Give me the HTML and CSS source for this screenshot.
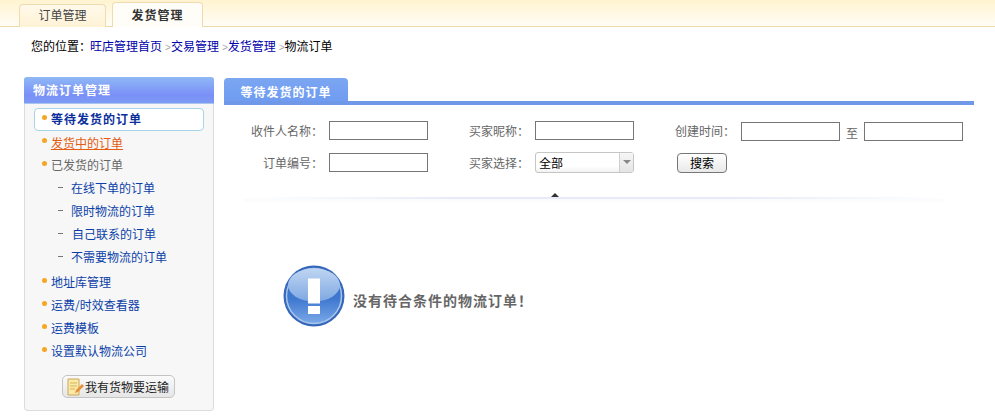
FILE: index.html
```html
<!DOCTYPE html>
<html lang="zh-CN">
<head>
<meta charset="utf-8">
<title>物流订单</title>
<link rel="stylesheet" href="styles.css">
</head>
<body>
<nav class="topbar">
  <a class="toptab">订单管理</a>
  <a class="toptab active">发货管理</a>
</nav>
<div class="crumbs">您的位置：<a>旺店管理首页</a><i>&gt;</i><a>交易管理</a><i>&gt;</i><a>发货管理</a><i>&gt;</i>物流订单</div>
<div class="layout">
  <aside class="side">
    <h2 class="side-head">物流订单管理</h2>
    <ul class="menu">
      <li class="item current">等待发货的订单</li>
      <li class="item doing">发货中的订单</li>
      <li class="item plain">已发货的订单</li>
      <li class="sub">在线下单的订单</li>
      <li class="sub">限时物流的订单</li>
      <li class="sub indent">自己联系的订单</li>
      <li class="sub last">不需要物流的订单</li>
      <li class="item">地址库管理</li>
      <li class="item">运费/时效查看器</li>
      <li class="item">运费模板</li>
      <li class="item">设置默认物流公司</li>
    </ul>
    <div class="ship-wrap">
      <button class="ship" type="button">
        <svg width="17" height="18" viewBox="0 0 17 18"><path d="M1 1h11v16H1z" fill="#fbe9a6" stroke="#c9a860"/><path d="M3 5h7M3 8h7M3 11h5" stroke="#d9b45c"/><path d="M8 15l1-3 6-6 2 2-6 6z" fill="#e8913a"/></svg>
        我有货物要运输
      </button>
    </div>
  </aside>
  <main class="main">
    <div class="tabline"><h2 class="maintab">等待发货的订单</h2></div>
    <form class="filters">
      <label class="lab">收件人名称：</label><input class="txt" type="text">
      <label class="lab">买家昵称：</label><input class="txt" type="text">
      <label class="lab">创建时间：</label>
      <span class="range"><input class="txt" type="text"><span class="to">至</span><input class="txt" type="text"></span>
      <label class="lab">订单编号：</label><input class="txt" type="text">
      <label class="lab">买家选择：</label>
      <span class="select"><span class="select-val">全部</span><span class="select-arrow"></span></span>
      <span class="search-cell"><button class="search" type="button">搜索</button></span>
    </form>
    <div class="divider"><span class="collapse"></span></div>
    <div class="empty">
      <svg class="empty-icon" width="64" height="64" viewBox="0 0 64 64">
        <defs>
          <linearGradient id="ball" x1="0" y1="0" x2="0" y2="1"><stop offset="0" stop-color="#3a70c8"/><stop offset=".55" stop-color="#3f78cf"/><stop offset="1" stop-color="#7aa8e8"/></linearGradient>
          <linearGradient id="gloss" x1="0" y1="0" x2="0" y2="1"><stop offset="0" stop-color="#bfd5f2"/><stop offset="1" stop-color="#7ea8e2"/></linearGradient>
        </defs>
        <circle cx="32" cy="32" r="30.5" fill="#3568ba"/>
        <circle cx="32" cy="32" r="27.5" fill="url(#ball)" stroke="#a9c5ec" stroke-width="1.5"/>
        <ellipse cx="32" cy="21" rx="26" ry="16.5" fill="url(#gloss)"/>
        <path d="M26 14.500h12v25H26zM26 42h12v8H26z" fill="#fff"/>
      </svg>
      <strong class="empty-text">没有待合条件的物流订单！</strong>
    </div>
  </main>
</div>
</body>
</html>
```

FILE: styles.css
```css
* { box-sizing: border-box; }
html, body { margin: 0; padding: 0; }
body {
  width: 995px;
  height: 417px;
  overflow: hidden;
  background: #fff;
  color: #000;
  font: 12px/16px "Noto Sans CJK SC", sans-serif;
}
ul { list-style: none; margin: 0; padding: 0; }
h2 { margin: 0; }

.topbar {
  height: 27px;
  padding: 0 0 0 19px;
  display: flex;
  align-items: flex-end;
  gap: 6px;
  background: linear-gradient(#fff3d0, #fffdf6);
  border-bottom: 1px solid #eed9a8;
}
.toptab {
  width: 87px;
  height: 23px;
  margin-bottom: -1px;
  border: 1px solid #efdcae;
  border-bottom: 0;
  border-radius: 4px 4px 0 0;
  background: linear-gradient(#fff9ea, #fff3d6);
  color: #444;
  text-align: center;
  line-height: 19px;
}
.toptab.active {
  width: 91px;
  height: 25px;
  background: #fffdf8;
  color: #333;
  font-weight: 700;
  letter-spacing: 1px;
  line-height: 23px;
}

.crumbs { padding: 11px 0 0 31px; height: 50px; }
.crumbs a { color: #00a; }
.crumbs a:first-of-type { margin-left: -1px; }
.crumbs i { color: #aaa; font: 10px/16px "Liberation Sans", sans-serif; padding: 0 0 0 3px; }

.layout { display: flex; align-items: flex-start; padding-left: 24px; gap: 10px; }

.side {
  width: 190px;
  height: 334px;
  background: #f7f7f7;
  border: 1px solid #dcdcdc;
  border-top: 0;
  border-radius: 4px;
}
.side-head {
  height: 27px;
  margin: 0 -1px;
  padding-left: 9px;
  border-radius: 3px 3px 0 0;
  background: linear-gradient(#8fb8f5, #7a8ff7 70%, #7d9cf5);
  border-bottom: 1px solid #a9c4ee;
  color: #fff;
  font-size: 12px;
  letter-spacing: 1px;
  line-height: 25px;
  font-weight: 700;
}
.menu { padding-top: 4px; }
.item, .sub { color: #0b3fa8; height: 23px; line-height: 22px; position: relative; }
.item { margin-left: 9px; padding-left: 17px; }
.item::before {
  content: "";
  position: absolute;
  left: 8px;
  top: 7px;
  width: 5px;
  height: 5px;
  border-radius: 50%;
  background: #f5a623;
}
.item.current {
  width: 170px;
  height: 23px;
  background: #fff;
  border: 1px solid #a8d4ea;
  border-radius: 4px;
  padding-left: 16px;
  line-height: 20px;
  color: #0b2f9c;
  font-weight: 700;
  letter-spacing: 1px;
}
.item.current::before { left: 7px; top: 6px; }
.item.doing { color: #e25c12; line-height: 23px; text-decoration: underline; }
.item.plain { color: #666; }
.sub { margin-left: 21px; padding-left: 25px; }
.sub::before {
  content: "";
  position: absolute;
  left: 12px;
  top: 10px;
  width: 5px;
  height: 1px;
  background: #777;
}
.sub.indent { padding-left: 26px; }
.sub.last { margin-bottom: 2px; }

.ship-wrap { padding: 12px 0 0 37px; }
.ship {
  width: 113px;
  height: 23px;
  padding: 0 0 0 4px;
  display: flex;
  align-items: center;
  gap: 1px;
  border: 1px solid #c4c4c4;
  border-radius: 5px;
  background: linear-gradient(#fafafa, #e6e6e6);
  color: #222;
  font: 12px/16px "Noto Sans CJK SC", sans-serif;
}

.main { width: 750px; }
.tabline { height: 27px; margin-top: 1px; border-bottom: 4px solid #6f98e8; }
.maintab {
  width: 124px;
  height: 23px;
  border-radius: 4px 4px 0 0;
  background: linear-gradient(#7ba6ef, #77a2f3 40%, #6f9cf0);
  color: #fff;
  font-size: 12px;
  letter-spacing: 1px;
  line-height: 28px;
  font-weight: 700;
  text-align: center;
}
.filters {
  display: grid;
  grid-template-columns: 105px 99px 107px 99px 107px 222px;
  grid-auto-rows: 20px;
  row-gap: 12px;
  padding-top: 16px;
  align-items: center;
}
.lab { color: #666; text-align: right; padding-right: 6px; }
.txt { width: 99px; height: 19px; margin: 0; padding: 0; border: 1px solid #767676; background: #fff; align-self: start; }
.range { display: flex; align-items: flex-start; }
.to { width: 24px; color: #666; text-align: center; padding-top: 3px; }
.select {
  width: 99px;
  height: 21px;
  margin-top: -1px;
  align-self: start;
  display: flex;
  border: 1px solid #c6c6c6;
  border-radius: 3px;
  background: linear-gradient(#fff 70%, #f2f2f2);
}
.select-val { flex: 1; padding-left: 3px; line-height: 19px; }
.select-arrow {
  width: 14px;
  border-left: 1px solid #cfcfcf;
  background: linear-gradient(#f6f6f6, #e4e4e4);
  position: relative;
}
.select-arrow::after {
  content: "";
  position: absolute;
  left: 3px;
  top: 7px;
  border: 4px solid transparent;
  border-top: 4px solid #888;
  border-bottom: 0;
}
.search-cell { grid-column: 5 / 7; padding-left: 43px; }
.search {
  display: block;
  width: 50px;
  height: 20px;
  padding: 0;
  border: 1px solid #777;
  border-radius: 4px;
  background: linear-gradient(#fff, #e9e9e9);
  color: #000;
  font: 12px/16px "Noto Sans CJK SC", sans-serif;
}
.divider {
  position: relative;
  height: 2px;
  margin: 24px 30px 0 20px;
  background: linear-gradient(90deg, #fff, #e6ebf7 30%, #e6ebf7 70%, #fff);
  box-shadow: 0 2px 3px #f5f7fc;
}
.collapse {
  position: absolute;
  left: 307px;
  top: -4px;
  border: 4px solid transparent;
  border-top: 0;
  border-bottom: 4px solid #333;
}
.empty { display: flex; align-items: center; gap: 7px; padding: 65px 0 0 58px; }
.empty-icon { display: block; flex: none; }
.empty-text { color: #666; font-size: 14px; letter-spacing: 1px; line-height: 20px; padding-top: 7px; }
```
